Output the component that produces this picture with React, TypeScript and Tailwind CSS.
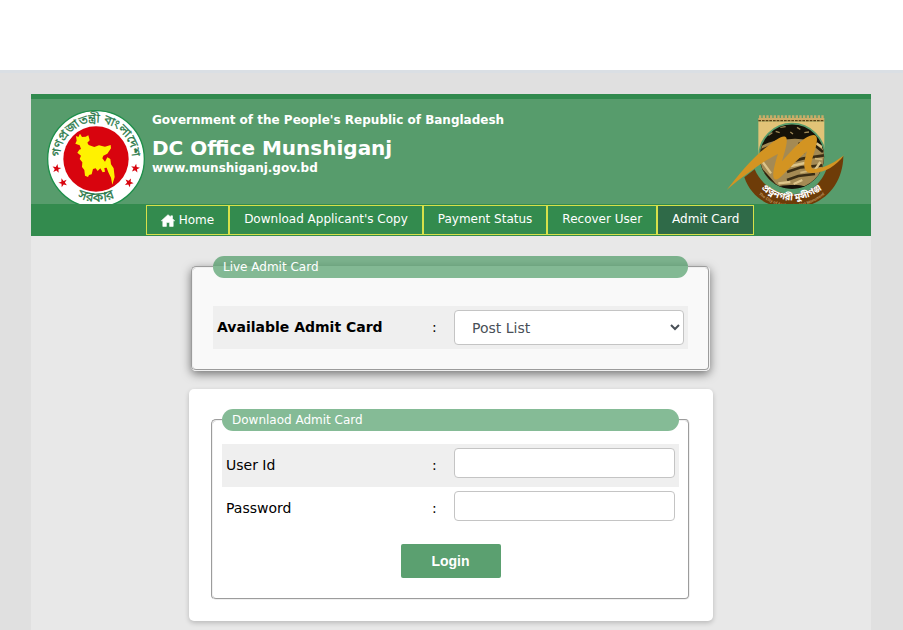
import type { ReactNode } from "react";

const NAV = ["Download Applicant's Copy", "Payment Status", "Recover User", "Admit Card"];

const STARS: [number, number, number][] = [
  [95, 251, 10],
  [114, 293, -20],
  [331, 250, 10],
  [312, 293, 25],
];

function Seal() {
  return (
    <svg viewBox="66 75 294 282" className="h-[94px] w-[98px] shrink-0" role="img" aria-label="Government seal">
      <defs>
        <path id="seal-top" d="M108 246 A108 108 0 1 1 318 246" />
        <path id="seal-bottom" d="M118 310 A132 132 0 0 0 308 310" />
      </defs>
      <circle cx="213" cy="222" r="145" fill="#fff" stroke="#1e8f4a" strokeWidth="4" />
      <circle cx="213" cy="222" r="98" fill="#d8040e" />
      <path
        fill="#fff200"
        d="M153 153 L160 156 L165 146 L171 156 L182 155 L190 151 L194 166 L187 173 L191 180 L208 186 L222 181 L240 185 L257 180 L258 190 L247 206 L235 212 L232 220 L240 230 L247 217 L256 222 L258 238 L266 250 L269 276 L262 299 L258 278 L250 262 L245 248 L238 249 L240 260 L233 262 L226 250 L218 258 L212 250 L204 252 L200 268 L192 270 L189 276 L180 272 L178 255 L171 246 L172 232 L164 222 L168 212 L157 203 L163 194 L168 192 L164 181 L151 176 L155 167 Z"
      />
      {STARS.map(([x, y, r]) => (
        <path
          key={`${x}-${y}`}
          transform={`translate(${x} ${y}) rotate(${r})`}
          fill="#d8040e"
          d="M0 -14 L3.4 -4.4 L13.3 -4.3 L5.4 1.8 L8.2 11.3 L0 5.7 L-8.2 11.3 L-5.4 1.8 L-13.3 -4.3 L-3.4 -4.4 Z"
        />
      ))}
      <g fill="#2b7a4a" stroke="#2b7a4a" strokeWidth="0.7" fontFamily="'Noto Sans Bengali', 'Noto Sans', sans-serif" fontWeight="400">
        <text textAnchor="middle" fontSize="37">
          <textPath href="#seal-top" startOffset="50%">গণপ্রজাতন্ত্রী বাংলাদেশ</textPath>
        </text>
        <text textAnchor="middle" fontSize="40">
          <textPath href="#seal-bottom" startOffset="50%">সরকার</textPath>
        </text>
      </g>
    </svg>
  );
}

function DistrictLogo() {
  return (
    <svg viewBox="30 72 360 270" className="h-[90px] w-[120px] shrink-0" role="img" aria-label="Munshiganj district logo">
      <defs>
        <clipPath id="ruins">
          <circle cx="231" cy="200" r="96" />
        </clipPath>
        <path id="band-text" d="M114 263 A133 133 0 0 0 346 263" />
        <path id="band-sub" d="M110 290 A150 150 0 0 0 350 290" />
      </defs>
      <rect x="130" y="94" width="198" height="122" fill="#e2c377" />
      <rect x="130" y="84" width="198" height="10" fill="#cfae68" />
      <path d="M132 80 H328" stroke="#c9ac68" strokeWidth="8" strokeDasharray="7 4" />
      <path d="M130 92 H328" stroke="#5c4314" strokeWidth="4" strokeDasharray="8 3" />
      <circle cx="231" cy="200" r="99" fill="#161208" stroke="#579c6c" strokeWidth="5" />
      <g clipPath="url(#ruins)" fill="none">
        <path d="M130 172 L160 158 L188 150 L240 146 L290 150 L330 180 L335 262 L290 292 L240 284 L200 292 L160 292 L130 250 Z" fill="#a48a54" />
        <path d="M160 136 l12 -8 M182 124 l12 4 M196 112 l16 -2 M246 112 l10 6 M268 128 l14 -2 M226 126 l8 6" stroke="#a08a58" strokeWidth="4" />
        <path d="M134 182 L176 166 L200 170 M226 216 L262 206 L328 196 M216 246 L258 232 L322 226 M216 270 L250 258 L300 252 M250 160 L278 172" stroke="#3a2d14" strokeWidth="8" />
        <path d="M136 236 L160 262 L184 290 M240 180 L270 186 M302 168 L324 186" stroke="#2a200c" strokeWidth="8" />
        <path d="M136 206 L168 250 M228 228 L270 219 M236 282 L262 270 M300 240 L316 216 M304 160 L322 172 M190 280 L226 276" stroke="#dcc48a" strokeWidth="7" />
        <path d="M150 190 L176 184 M240 198 L264 192 M256 248 L286 242 M300 206 L322 208" stroke="#d0b67a" strokeWidth="5" />
        <path d="M186 296 C210 288 250 290 276 296" stroke="#17120a" strokeWidth="12" />
      </g>
      <path d="M88 262 C112 330 170 356 235 354 C325 350 384 285 385 198 C370 214 354 225 336 234 C318 285 280 312 232 312 C180 312 140 285 119 238 Z" fill="#6e3c08" />
      <path
        fill="#d39422"
        d="M35 300 C68 258 108 208 148 176 C178 152 206 130 214 143 C219 155 209 186 201 214 C232 180 270 134 297 135 C314 138 303 170 295 196 C288 220 283 239 301 237 C335 232 362 215 387 196 C362 230 322 254 282 248 C262 243 266 215 276 184 C245 208 212 250 192 265 C177 276 172 262 176 240 C180 220 185 203 189 192 C160 205 130 226 105 245 C80 262 55 282 35 300 Z"
      />
      <text fill="#fff" fontSize="28" fontWeight="700" textAnchor="middle" fontFamily="'Noto Sans Bengali', 'Noto Sans', sans-serif">
        <textPath href="#band-text" startOffset="50%">প্রত্ননগরী মুন্সীগঞ্জ</textPath>
      </text>
      <text fill="#c39a62" fontSize="12" textAnchor="middle" fontFamily="'Liberation Sans', sans-serif">
        <textPath href="#band-sub" startOffset="50%">The City of Archaeological Monument</textPath>
      </text>
    </svg>
  );
}

function HomeIcon() {
  return (
    <svg viewBox="0 0 14 13" className="h-[13px] w-[14px]" fill="#fff" stroke="#fff" strokeWidth="0.6" strokeLinejoin="round" aria-hidden="true">
      <path d="M7 0.7 L9.8 3.1 V1.8 H11.5 V4.7 L13.7 6.8 H12.2 V12.4 H8.6 V8.4 H5.4 V12.4 H1.8 V6.8 H0.3 Z" />
    </svg>
  );
}

function Legend({ children }: { children: ReactNode }) {
  return (
    <legend className="w-full rounded-full bg-[#2c8a4a]/58 px-2.5 text-xs leading-[22px] text-white">{children}</legend>
  );
}

function Row({ id, label, bold, striped, children }: { id: string; label: string; bold?: boolean; striped?: boolean; children: ReactNode }) {
  return (
    <div className={`flex h-[43px] px-1 pt-1 ${striped ? "bg-[#efefef]" : ""}`}>
      <label htmlFor={id} className={`flex-1 leading-[35px] ${bold ? "font-bold" : ""}`}>
        {label}
      </label>
      <span className="w-[22px] leading-[35px]">:</span>
      {children}
    </div>
  );
}

const field = "rounded border border-[#c4c4c4] bg-white";
const group = "rounded-[5px] border-2 border-[#f0f0f0] [border-style:groove] pb-5";
const navItem = "flex items-center border border-[#d6e04a] px-3.5 text-xs text-white";

export default function App() {
  return (
    <div className="min-h-screen bg-[#e0e0e0] font-['DejaVu_Sans',Verdana,sans-serif] text-sm text-black">
      <div className="h-[70px] bg-white" />
      <div className="border-t-3 border-[#dadfe4] pt-[21px] pr-8 pl-[31px]">
        <header className="border-t-5 border-[#318a4e] bg-[#579c6c]">
          <div className="flex h-[105px] items-end gap-[7px] pr-[26px] pl-4 font-bold text-white">
            <Seal />
            <div className="flex-1 self-start pt-[13px] text-xs">
              <p className="leading-4">Government of the People's Republic of Bangladesh</p>
              <h1 className="mt-1.5 text-xl leading-7">DC Office Munshiganj</h1>
              <p className="leading-3">www.munshiganj.gov.bd</p>
            </div>
            <DistrictLogo />
          </div>
          <nav className="flex h-8 justify-center bg-[#338b4e] py-px pr-0.5">
            <a href="#home" className={`${navItem} gap-1`}>
              <HomeIcon />
              Home
            </a>
            {NAV.map((item) => (
              <a
                key={item}
                href="#nav"
                className={`${navItem} pb-[3px] ${item === "Admit Card" ? "bg-[#2f6a48]" : ""}`}
              >
                {item}
              </a>
            ))}
          </nav>
        </header>

        <main className="bg-[#e8e8e8] pt-5 pb-[9px]">
          <div className="mx-auto w-full max-w-[524px]">
            <fieldset className={`${group} mr-[3px] ml-0.5 bg-[#f9f9f9] px-5 shadow-[0_3px_10px_rgba(0,0,0,0.5)]`}>
              <Legend>Live Admit Card</Legend>
              <div className="pt-7">
                <Row id="post" label="Available Admit Card" bold striped>
                  <select id="post" className={`${field} h-[35px] w-[230px] pl-[13px] text-[#495057]`}>
                    <option>Post List</option>
                  </select>
                </Row>
              </div>
            </fieldset>

            <form className="mt-[18px] rounded-[5px] bg-white pt-5 pr-[23px] pb-[21px] pl-[22px] shadow-[0_2px_5px_rgba(0,0,0,0.2)]">
              <fieldset className={`${group} px-[9px]`}>
                <Legend>Downlaod Admit Card</Legend>
                <div className="pt-[13px]">
                  <Row id="user" label="User Id" striped>
                    <input id="user" type="text" className={`${field} h-[30px] w-[221px] px-2`} />
                  </Row>
                  <Row id="password" label="Password">
                    <input id="password" type="password" className={`${field} h-[30px] w-[221px] px-2`} />
                  </Row>
                </div>
                <button
                  type="button"
                  className="mx-auto mt-3.5 block h-[34px] w-[100px] rounded-xs bg-[#5ba070] font-['Liberation_Sans',Arial,sans-serif] font-bold text-white"
                >
                  Login
                </button>
              </fieldset>
            </form>
          </div>
        </main>
      </div>
    </div>
  );
}
